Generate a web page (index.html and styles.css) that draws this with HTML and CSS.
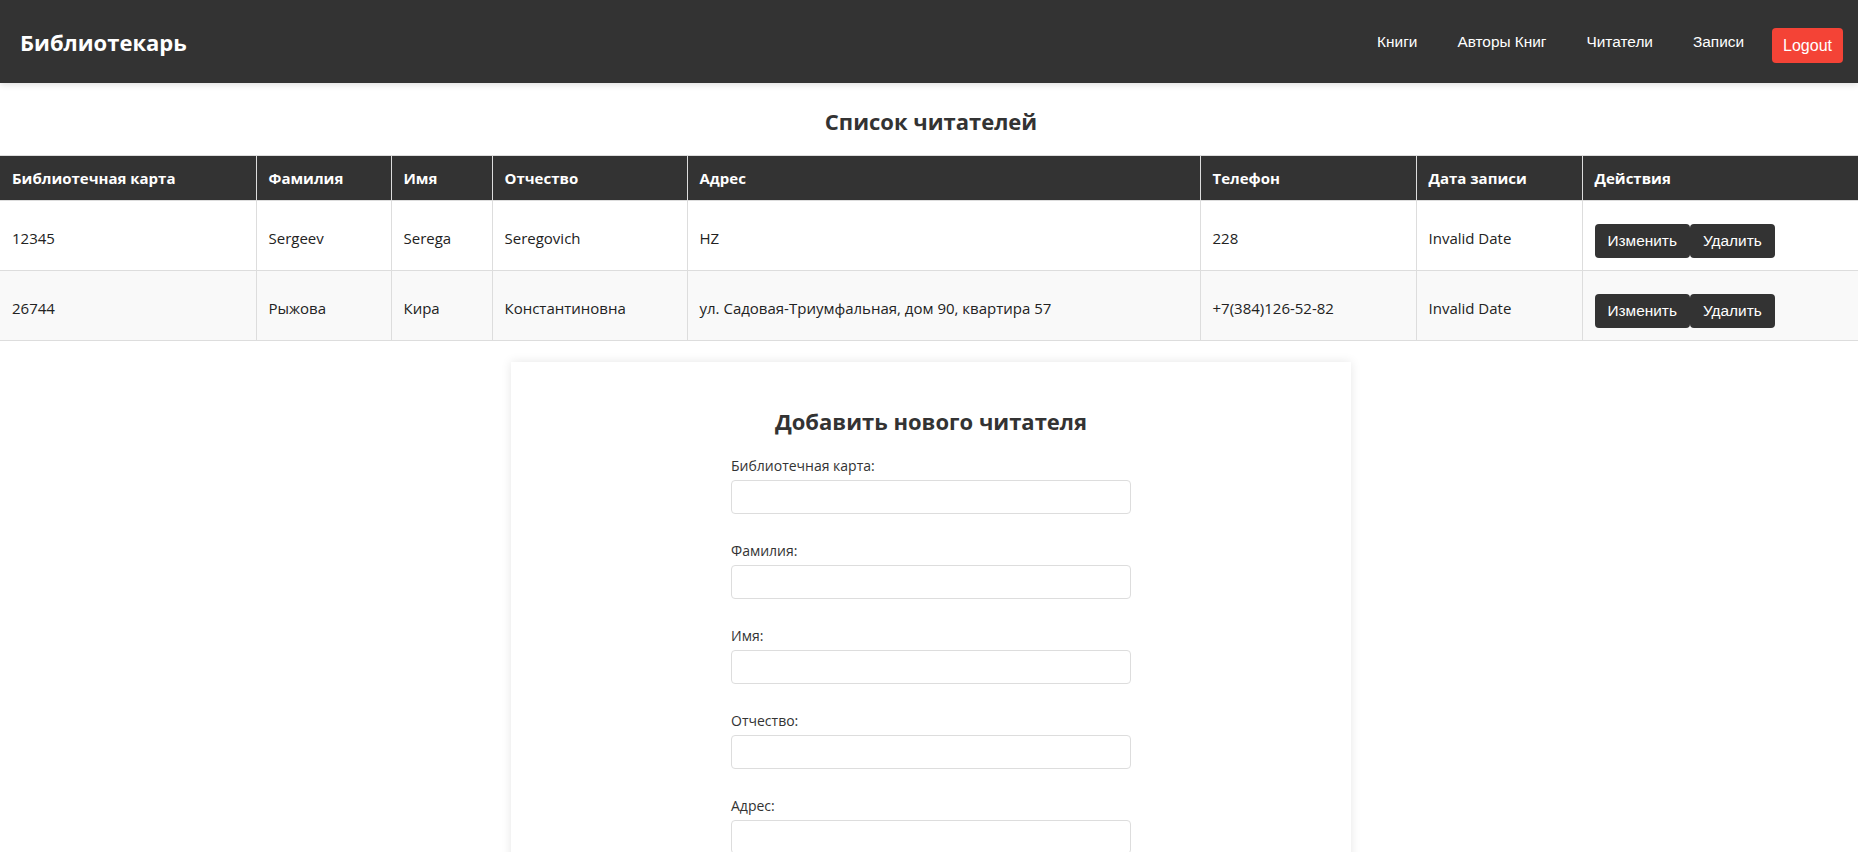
FILE: index.html
```html
<!DOCTYPE html>
<html lang="ru">
<head>
<meta charset="utf-8">
<title>Библиотекарь</title>
<link rel="stylesheet" href="styles.css">
</head>
<body>
<header class="topbar">
  <div class="brand">Библиотекарь</div>
  <nav class="nav">
    <a class="nav-link" href="#">Книги</a>
    <a class="nav-link" href="#">Авторы Книг</a>
    <a class="nav-link" href="#">Читатели</a>
    <a class="nav-link" href="#">Записи</a>
    <button class="logout">Logout</button>
  </nav>
</header>

<main>
  <h2 class="page-title">Список читателей</h2>
  <table class="readers">
    <colgroup>
      <col class="c-card"><col class="c-last"><col class="c-first"><col class="c-middle">
      <col class="c-addr"><col class="c-phone"><col class="c-date"><col class="c-act">
    </colgroup>
    <thead>
      <tr>
        <th>Библиотечная карта</th><th>Фамилия</th><th>Имя</th><th>Отчество</th>
        <th>Адрес</th><th>Телефон</th><th>Дата записи</th><th>Действия</th>
      </tr>
    </thead>
    <tbody>
      <tr>
        <td>12345</td><td>Sergeev</td><td>Serega</td><td>Seregovich</td>
        <td>HZ</td><td>228</td><td>Invalid Date</td>
        <td><div class="actions"><button class="btn">Изменить</button><button class="btn">Удалить</button></div></td>
      </tr>
      <tr>
        <td>26744</td><td>Рыжова</td><td>Кира</td><td>Константиновна</td>
        <td>ул. Садовая-Триумфальная, дом 90, квартира 57</td><td>+7(384)126-52-82</td><td>Invalid Date</td>
        <td><div class="actions"><button class="btn">Изменить</button><button class="btn">Удалить</button></div></td>
      </tr>
    </tbody>
  </table>

  <section class="card">
    <h2 class="card-title">Добавить нового читателя</h2>
    <form class="form">
      <label class="label">Библиотечная карта:</label>
      <input class="input" type="text">
      <label class="label">Фамилия:</label>
      <input class="input" type="text">
      <label class="label">Имя:</label>
      <input class="input" type="text">
      <label class="label">Отчество:</label>
      <input class="input" type="text">
      <label class="label">Адрес:</label>
      <input class="input" type="text">
      <label class="label">Телефон:</label>
      <input class="input" type="text">
      <label class="label">Дата записи:</label>
      <input class="input" type="text">
      <button class="submit" type="button">Добавить</button>
    </form>
  </section>
</main>
</body>
</html>
```

FILE: styles.css
```css
* { box-sizing: border-box; }

body {
  margin: 0;
  font-family: "Open Sans", "Noto Sans", sans-serif;
  color: #333;
  background: #fff;
}

.topbar {
  height: 83px;
  background: #333;
  display: flex;
  align-items: center;
  justify-content: space-between;
  padding: 0 15px 0 20px;
  box-shadow: 0 2px 6px rgba(0, 0, 0, 0.12);
  position: relative;
}

.brand {
  color: #fff;
  font-weight: 700;
  font-size: 22px;
  line-height: 30px;
}

.nav {
  display: flex;
  align-items: center;
}

.nav-link {
  color: #fff;
  text-decoration: none;
  font-family: "Liberation Sans", Arial, sans-serif;
  font-size: 15.4px;
  line-height: 20px;
  padding: 0 20px;
}

.logout {
  margin-left: 8px;
  margin-top: 8px;
  height: 35px;
  padding: 0 11px;
  border: none;
  border-radius: 4px;
  background: #f44336;
  color: #fff;
  font-family: "Liberation Sans", Arial, sans-serif;
  font-size: 16px;
}

.page-title {
  margin: 23px 0 19px;
  padding-left: 4px;
  text-align: center;
  font-size: 22px;
  line-height: 30px;
  font-weight: 700;
  color: #333;
}

.readers {
  width: 100%;
  border-collapse: collapse;
  table-layout: fixed;
  font-size: 15px;
}

.c-card { width: 256px; }
.c-last { width: 135px; }
.c-first { width: 101px; }
.c-middle { width: 195px; }
.c-addr { width: 513px; }
.c-phone { width: 216px; }
.c-date { width: 166px; }
.c-act { width: 276px; }

.readers th,
.readers td {
  border: 1px solid #ddd;
  text-align: left;
}

.readers th {
  background: #333;
  color: #fff;
  font-weight: 700;
  padding: 12px;
  line-height: 20px;
}

.readers td {
  padding: 16px 12px 12px;
  line-height: 20px;
  vertical-align: middle;
  color: #222;
}

.readers tbody tr:nth-child(even) td {
  background: #f9f9f9;
}

.readers tr > :first-child { border-left: none; }
.readers tr > :last-child { border-right: none; }

.actions {
  display: flex;
  margin-top: 7px;
}

.btn {
  height: 34px;
  padding: 0 13px;
  border: none;
  border-radius: 4px;
  background: #333;
  color: #fff;
  font-family: "Liberation Sans", Arial, sans-serif;
  font-size: 15.4px;
}

.card {
  width: 840px;
  margin: 21px auto 40px calc(50% - 418px);
  padding: 20px;
  background: #fff;
  box-shadow: 0 0 10px rgba(0, 0, 0, 0.1);
}

.card-title {
  margin: 23px 0 19px;
  text-align: center;
  font-size: 22px;
  line-height: 32px;
  font-weight: 700;
  color: #333;
}

.form {
  width: 400px;
  margin: 0 auto;
  display: flex;
  flex-direction: column;
}

.label {
  font-size: 14px;
  line-height: 20px;
  margin-bottom: 4px;
  color: #333;
}

.input {
  height: 34px;
  border: 1px solid #ddd;
  border-radius: 4px;
  margin-bottom: 27px;
  font-size: 14px;
  padding: 6px 8px;
}

.submit {
  align-self: flex-start;
  height: 36px;
  padding: 0 16px;
  border: none;
  border-radius: 4px;
  background: #333;
  color: #fff;
  font-size: 16px;
}
```
